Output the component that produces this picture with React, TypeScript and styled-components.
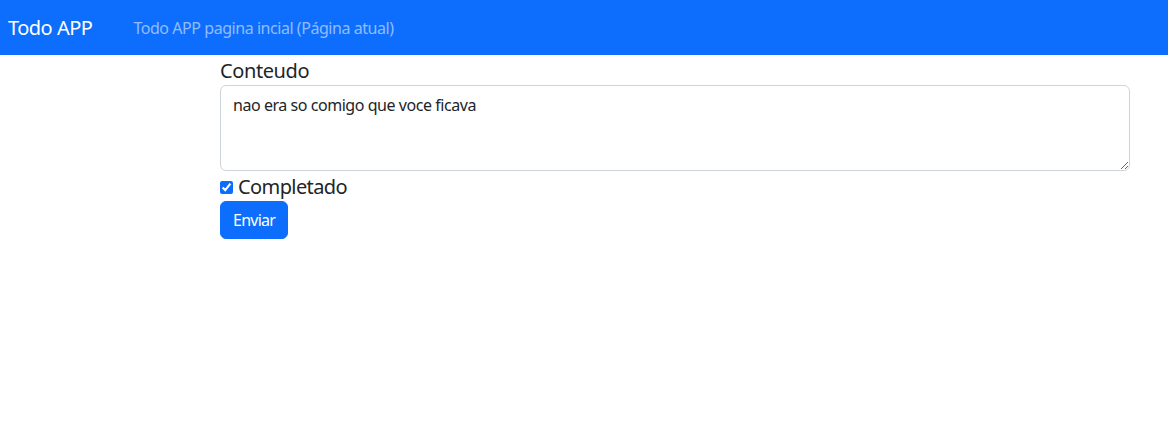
import React from 'react';
import styled, { createGlobalStyle } from 'styled-components';

const GlobalStyle = createGlobalStyle`
  * { box-sizing: border-box; }
  body {
    margin: 0;
    font-family: "Noto Sans", "Open Sans", "Liberation Sans", sans-serif;
    font-size: 16px;
    line-height: 1.5;
    color: #212529;
    background: #fff;
  }
`;

const Navbar = styled.nav`
  display: flex;
  align-items: center;
  height: 55px;
  padding: 0 8px;
  background-color: #0d6efd;
`;

const Brand = styled.a`
  font-size: 20px;
  line-height: 30px;
  letter-spacing: -0.5px;
  color: #fff;
  text-decoration: none;
  margin-right: 41px;
`;

const NavLink = styled.a`
  font-size: 16px;
  letter-spacing: -0.45px;
  color: rgba(255, 255, 255, 0.55);
  text-decoration: none;
`;

const Main = styled.main`
  padding: 1px 38px 0 220px;
`;

const Form = styled.form`
  display: flex;
  flex-direction: column;
  align-items: flex-start;
`;

const Label = styled.label`
  font-size: 20px;
  line-height: 29px;
  letter-spacing: -0.4px;
`;

const TextArea = styled.textarea`
  width: 100%;
  height: 86px;
  padding: 7px 12px 5px;
  font: inherit;
  font-size: 16px;
  line-height: 24px;
  letter-spacing: -0.45px;
  color: #212529;
  border: 1px solid #ced4da;
  border-radius: 6px;
  outline: none;
  resize: vertical;
`;

const CheckRow = styled.label`
  display: flex;
  align-items: center;
  height: 30px;
  padding-top: 2px;
  font-size: 20px;
  line-height: 28px;
  letter-spacing: -0.6px;
`;

const Check = styled.input`
  width: 13px;
  height: 13px;
  margin: 0 5px 0 0;
  accent-color: #0d6efd;
`;

const Button = styled.button`
  padding: 6px 12px;
  font: inherit;
  font-size: 16px;
  line-height: 24px;
  letter-spacing: -0.75px;
  color: #fff;
  background-color: #0d6efd;
  border: 1px solid #0d6efd;
  border-radius: 6px;
  cursor: pointer;
`;

export default function App() {
  return (
    <>
      <GlobalStyle />
      <Navbar>
        <Brand href="#">Todo APP</Brand>
        <NavLink href="#">Todo APP pagina incial (Página atual)</NavLink>
      </Navbar>
      <Main>
        <Form onSubmit={(e) => e.preventDefault()}>
          <Label htmlFor="conteudo">Conteudo</Label>
          <TextArea id="conteudo" defaultValue="nao era so comigo que voce ficava" />
          <CheckRow>
            <Check type="checkbox" defaultChecked />
            Completado
          </CheckRow>
          <Button type="submit">Enviar</Button>
        </Form>
      </Main>
    </>
  );
}
